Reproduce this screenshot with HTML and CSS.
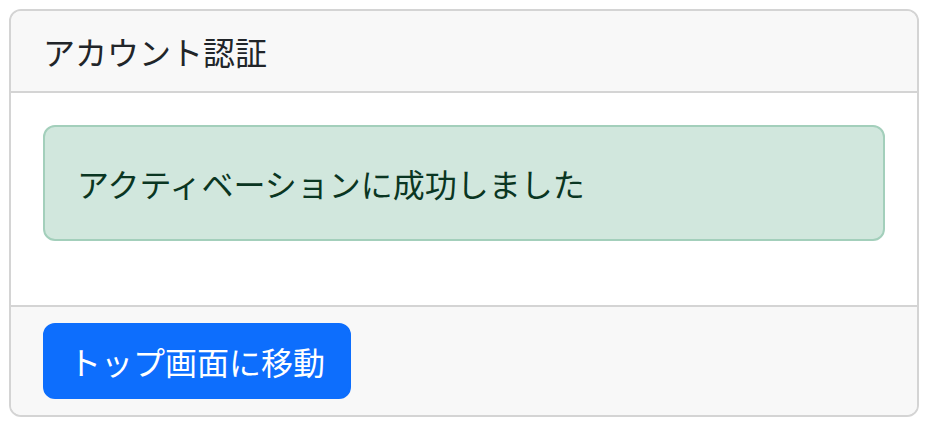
FILE: index.html
```html
<!DOCTYPE html>
<html lang="ja">
<head>
<meta charset="utf-8">
<link rel="stylesheet" href="styles.css">
</head>
<body>
<div class="card">
  <div class="card-header">アカウント認証</div>
  <div class="card-body">
    <div class="alert">アクティベーションに成功しました</div>
  </div>
  <div class="card-footer">
    <a class="btn" href="#">トップ画面に移動</a>
  </div>
</div>
</body>
</html>
```
FILE: styles.css
```css
* { box-sizing: border-box; }
html, body { margin: 0; padding: 0; background: #fff; }
body {
  padding: 9px;
  font-family: "Noto Sans CJK JP", "Noto Sans", sans-serif;
  font-size: 32px;
  line-height: 48px;
  color: #212529;
}
.card {
  width: 910px;
  border: 2px solid #d4d4d4;
  border-radius: 12px;
  overflow: hidden;
  background: #fff;
}
.card-header {
  padding: 16px 32px;
  background: #f8f8f8;
  border-bottom: 2px solid #d4d4d4;
}
.card-body {
  padding: 32px;
}
.alert {
  padding: 32px;
  margin-bottom: 32px;
  background: #d1e7dd;
  border: 2px solid #a3cfbb;
  border-radius: 12px;
  color: #0a3622;
}
.card-footer {
  padding: 16px 32px;
  background: #f8f8f8;
  border-top: 2px solid #d4d4d4;
}
.btn {
  display: inline-block;
  padding: 12px 24px;
  background: #0d6efd;
  border: 2px solid #0d6efd;
  border-radius: 12px;
  color: #fff;
  text-decoration: none;
}
```
